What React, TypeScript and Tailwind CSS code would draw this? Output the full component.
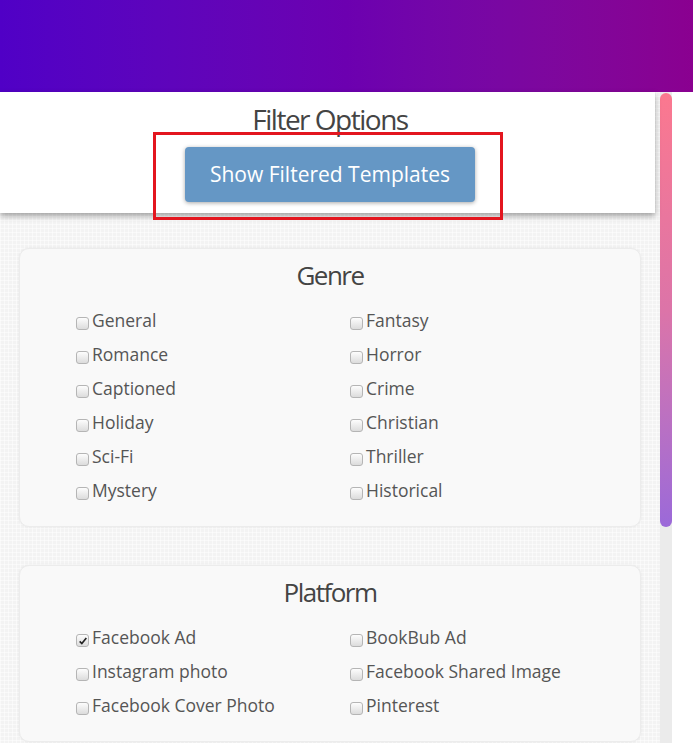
const GENRES = [
  ["General", "Fantasy"],
  ["Romance", "Horror"],
  ["Captioned", "Crime"],
  ["Holiday", "Christian"],
  ["Sci-Fi", "Thriller"],
  ["Mystery", "Historical"],
];

const PLATFORMS = [
  ["Facebook Ad", "BookBub Ad"],
  ["Instagram photo", "Facebook Shared Image"],
  ["Facebook Cover Photo", "Pinterest"],
];

const CHECKED = ["Facebook Ad"];

function Check({ label }: { label: string }) {
  const on = CHECKED.includes(label);
  return (
    <label className="flex items-center h-[34px] text-[17.5px] text-[#555] cursor-pointer">
      <span className="relative mt-[7px] mr-[3px] w-[13px] h-[13px] rounded-[3px] border border-[#b5b5b5] bg-gradient-to-b from-[#fdfdfd] to-[#dcdcdc] flex items-center justify-center">
        {on && (
          <svg viewBox="0 0 12 12" className="w-[10px] h-[10px]">
            <path d="M2 6.5 L4.6 9 L10 2.5" fill="none" stroke="#222" strokeWidth="2" />
          </svg>
        )}
      </span>
      {label}
    </label>
  );
}

function Section({ title, rows }: { title: string; rows: string[][] }) {
  return (
    <div className="mx-[19px] bg-[#f9f9f9] rounded-[10px] border border-[#ececec] shadow-[0_0_3px_rgba(0,0,0,0.06)] pt-[8px] pb-[19px]">
      <h2 className="text-center text-[26px] leading-[36px] tracking-[-1.5px] text-[#444] mb-[10px]">{title}</h2>
      <div className="grid grid-cols-2 w-[548px] ml-[56px]">
        {rows.flat().map((l) => (
          <Check key={l} label={l} />
        ))}
      </div>
    </div>
  );
}

export default function App() {
  return (
    <div className="w-[693px] h-[743px] overflow-hidden flex flex-col bg-white font-['Open_Sans','Liberation_Sans',sans-serif]">
      <div className="h-[92px] shrink-0 bg-gradient-to-r from-[#5000c6] via-[#6c00b0] to-[#8a0090]" />
      <div className="flex flex-1 min-h-0">
        <div className="w-[660px] shrink-0 flex flex-col bg-[#f3f3f3] bg-[linear-gradient(rgba(255,255,255,0.5)_1px,transparent_1px),linear-gradient(90deg,rgba(255,255,255,0.5)_1px,transparent_1px)] bg-[size:4px_4px]">
          <div className="relative z-10 h-[121px] shrink-0 bg-white shadow-[0_3px_6px_rgba(0,0,0,0.35)] mr-[5px] pl-[5px] flex flex-col items-center pt-[10px]">
            <h1 className="text-[28px] leading-[34px] tracking-[-1.5px] text-[#444]">Filter Options</h1>
            <button className="mt-[11px] w-[290px] h-[55px] rounded-[4px] bg-[#6597c5] text-white text-[21px] shadow-[0_1px_4px_rgba(0,0,0,0.35)]">
              Show Filtered Templates
            </button>
            <div className="absolute left-[153px] top-[40px] w-[350px] h-[88px] border-[3px] border-[#e3161f] pointer-events-none" />
          </div>
          <div className="flex flex-col gap-[38px] pt-[35px]">
            <Section title="Genre" rows={GENRES} />
            <Section title="Platform" rows={PLATFORMS} />
          </div>
        </div>
        <div className="w-[12px] shrink-0 bg-[#ebebeb] pt-[1px]">
          <div className="h-[434px] rounded-full bg-gradient-to-b from-[#fb788f] via-[#dc74a8] to-[#9b69d9]" />
        </div>
        <div className="flex-1 bg-white" />
      </div>
    </div>
  );
}
